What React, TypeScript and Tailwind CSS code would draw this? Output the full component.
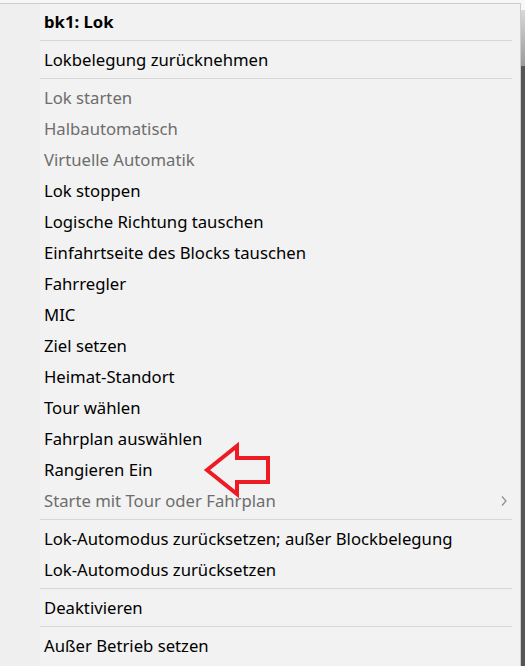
import React from 'react';

type Item = { label: string; disabled?: boolean; submenu?: boolean; bold?: boolean } | 'sep';

const items: Item[] = [
  { label: 'bk1: Lok', bold: true },
  'sep',
  { label: 'Lokbelegung zurücknehmen' },
  'sep',
  { label: 'Lok starten', disabled: true },
  { label: 'Halbautomatisch', disabled: true },
  { label: 'Virtuelle Automatik', disabled: true },
  { label: 'Lok stoppen' },
  { label: 'Logische Richtung tauschen' },
  { label: 'Einfahrtseite des Blocks tauschen' },
  { label: 'Fahrregler' },
  { label: 'MIC' },
  { label: 'Ziel setzen' },
  { label: 'Heimat-Standort' },
  { label: 'Tour wählen' },
  { label: 'Fahrplan auswählen' },
  { label: 'Rangieren Ein' },
  { label: 'Starte mit Tour oder Fahrplan', disabled: true, submenu: true },
  'sep',
  { label: 'Lok-Automodus zurücksetzen; außer Blockbelegung' },
  { label: 'Lok-Automodus zurücksetzen' },
  'sep',
  { label: 'Deaktivieren' },
  'sep',
  { label: 'Außer Betrieb setzen' },
];

export default function App() {
  return (
    <div
      className="relative w-[525px] h-[666px] overflow-hidden bg-[#f7f7f7] flex"
      style={{ fontFamily: '"Noto Sans", "Open Sans", sans-serif' }}
    >
      {/* Kontextmenü */}
      <div className="mt-[3px] w-[521px] border-t border-r border-[#cccccc] bg-[#f2f2f2] flex">
        {/* Icon-Spalte */}
        <div className="w-[40px] bg-[#efefef] shrink-0" />
        <div className="flex-1 pt-[2px] pr-[8px]">
          {items.map((it, i) =>
            it === 'sep' ? (
              <div key={i} className="my-[3px] h-px bg-[#d7d7d7]" />
            ) : (
              <div
                key={i}
                className={`h-[31px] flex items-center pl-[4px] pt-[2px] text-[16.7px] leading-none ${
                  it.bold ? 'font-bold text-black' : it.disabled ? 'text-[#6d6d6d]' : 'text-black'
                }`}
              >
                <span className="flex-1 whitespace-nowrap">{it.label}</span>
                {it.submenu && (
                  <svg width="8" height="12" viewBox="0 0 8 12" className="mr-[4px] -mt-[2px]">
                    <polyline points="2,1.5 6,6 2,10.5" fill="none" stroke="#8c8c8c" strokeWidth="1.2" />
                  </svg>
                )}
              </div>
            )
          )}
        </div>
      </div>

      {/* Schatten / Hintergrundfenster rechts */}
      <div className="w-[4px] flex flex-col">
        <div className="h-[10px] bg-[#f7f7f7]" />
        <div className="h-[56px] bg-gradient-to-b from-[#d8d8d8] to-[#9a9a9a]" />
        <div className="flex-1 bg-[#555555]" />
      </div>

      {/* roter Pfeil */}
      <svg className="absolute left-0 top-0 pointer-events-none" width="525" height="666">
        <polygon
          points="207,470 237,446 237,458 268,458 268,482 237,482 237,494"
          fill="none"
          stroke="#ed1c24"
          strokeWidth="4"
          strokeLinejoin="miter"
        />
      </svg>
    </div>
  );
}
